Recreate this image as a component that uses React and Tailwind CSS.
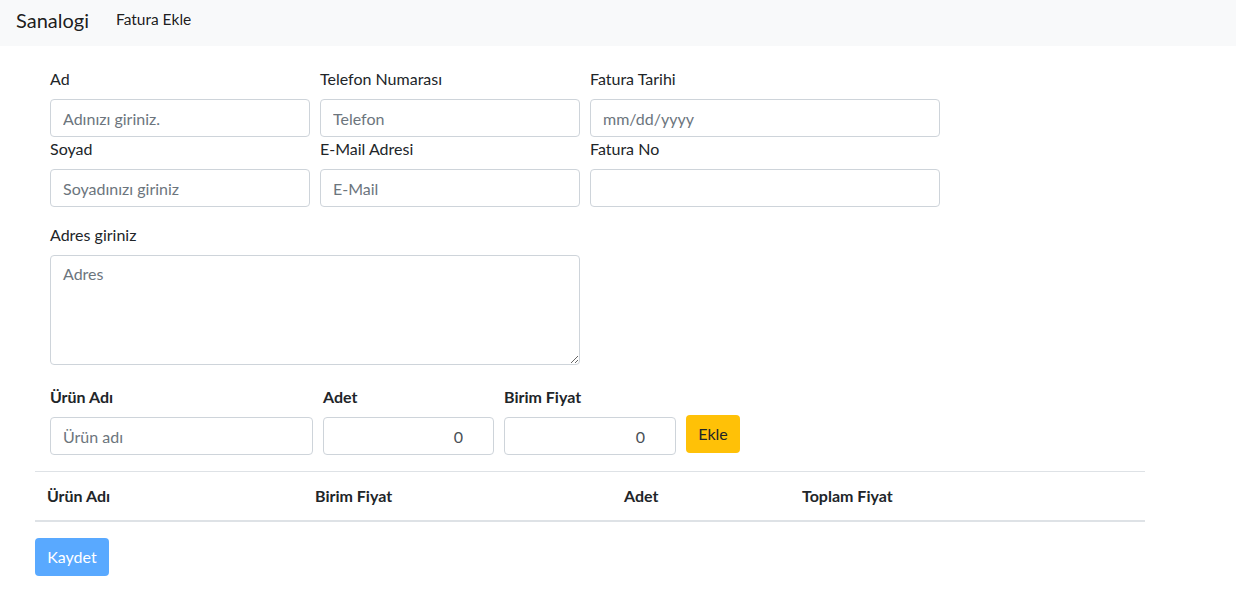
import React from "react";

const Field = ({ label, placeholder, type = "text", className = "" }) => (
  <div className={"flex flex-col " + className}>
    <label className="mb-2 h-6 leading-6 text-base text-[#212529]">{label}</label>
    <input
      type={type}
      placeholder={placeholder}
      className="h-[38px] w-full rounded border border-[#ced4da] px-3 text-base text-[#495057] placeholder:text-[#6c757d] outline-none"
    />
  </div>
);

const App = () => {
  return (
    <div className="min-h-screen bg-white font-['Segoe_UI',Lato,sans-serif] text-[#212529]">
      <nav className="flex h-[46px] items-center bg-[#f8f9fa] px-4 pb-[6px]">
        <span className="mr-[27px] text-xl text-black/90">Sanalogi</span>
        <span className="text-[15.5px] text-black/90">Fatura Ekle</span>
      </nav>

      <div className="px-[35px]">
        <div className="px-[15px] pt-[21px]">
          <div className="grid grid-cols-[260px_260px_350px] gap-x-[10px]">
            <Field label="Ad" placeholder="Adınızı giriniz." />
            <Field label="Telefon Numarası" placeholder="Telefon" />
            <Field label="Fatura Tarihi" placeholder="mm/dd/yyyy" />
            <Field label="Soyad" placeholder="Soyadınızı giriniz" />
            <Field label="E-Mail Adresi" placeholder="E-Mail" />
            <Field label="Fatura No" placeholder="" />
          </div>

          <div className="mt-4 flex w-[530px] flex-col">
            <label className="mb-2 h-6 leading-6">Adres giriniz</label>
            <textarea
              placeholder="Adres"
              className="h-[110px] w-full resize-y rounded border border-[#ced4da] px-3 py-[6px] text-base placeholder:text-[#6c757d] outline-none"
            />
          </div>

          <div className="mt-5 flex items-end gap-[10px]">
            <div className="flex w-[263px] flex-col">
              <label className="mb-2 h-6 font-bold leading-6">Ürün Adı</label>
              <input
                placeholder="Ürün adı"
                className="h-[38px] rounded border border-[#ced4da] px-3 text-base placeholder:text-[#6c757d] outline-none"
              />
            </div>
            <div className="flex w-[171px] flex-col">
              <label className="mb-2 h-6 font-bold leading-6">Adet</label>
              <input
                defaultValue="0"
                className="h-[38px] rounded border border-[#ced4da] pl-3 pr-[30px] text-right text-base text-[#495057] outline-none"
              />
            </div>
            <div className="flex w-[172px] flex-col">
              <label className="mb-2 h-6 font-bold leading-6">Birim Fiyat</label>
              <input
                defaultValue="0"
                className="h-[38px] rounded border border-[#ced4da] pl-3 pr-[30px] text-right text-base text-[#495057] outline-none"
              />
            </div>
            <button className="mb-[2px] h-[38px] w-[54px] rounded bg-[#ffc107] text-base text-[#212529]">
              Ekle
            </button>
          </div>
        </div>

        <table className="mt-4 w-[1110px] border-collapse text-left">
          <thead>
            <tr className="border-t border-b-2 border-t-[#dee2e6] border-b-[#dee2e6]">
              <th className="w-[268px] px-3 py-3 font-bold leading-6">Ürün Adı</th>
              <th className="w-[309px] px-3 py-3 font-bold leading-6">Birim Fiyat</th>
              <th className="w-[178px] px-3 py-3 font-bold leading-6">Adet</th>
              <th className="px-3 py-3 font-bold leading-6">Toplam Fiyat</th>
            </tr>
          </thead>
          <tbody></tbody>
        </table>

        <button className="mt-4 h-[38px] w-[74px] rounded bg-[#59a9ff] text-base text-white">
          Kaydet
        </button>
      </div>
    </div>
  );
};

export default App;
